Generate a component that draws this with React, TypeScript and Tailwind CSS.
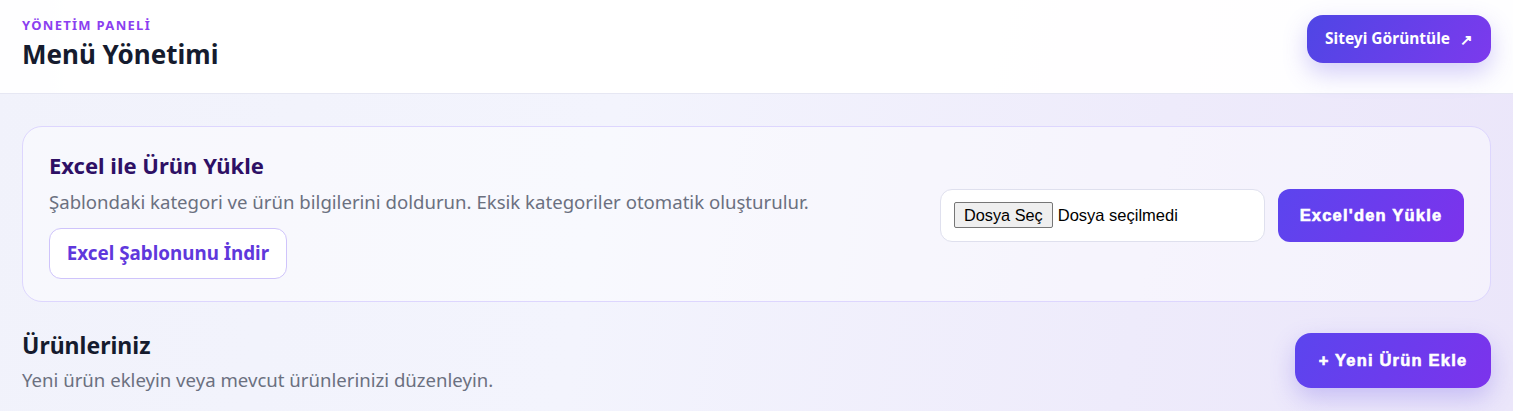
import React from "react";

export default function App() {
  const heavy = { fontFamily: '"Liberation Sans", Arial, sans-serif' };
  return (
    <div
      className="w-[1513px] h-[411px] overflow-hidden bg-[linear-gradient(100deg,#f1f2fb_0%,#f3f4fd_40%,#eeebfb_75%,#ebe6fa_100%)]"
      style={{ fontFamily: '"Noto Sans", "Open Sans", sans-serif' }}
    >
      <div className="relative">
        <div className="pointer-events-none absolute inset-y-0 left-0 w-[90px] bg-[linear-gradient(90deg,#e6e6f0,rgba(230,230,240,0))]" />
        <header className="relative flex h-[94px] items-start justify-between border-b border-[#e6e7f3] bg-white/95 px-[22px] pt-[15px]">
          <div className="mt-[2px] flex flex-col">
            <span className="text-[13px] font-bold leading-[16px] tracking-[0.1em] text-[#8b3ff0]">
              YÖNETİM PANELİ
            </span>
            <h1 className="mt-[5px] text-[26px] font-bold leading-[32px] text-[#151b2e]">
              Menü Yönetimi
            </h1>
          </div>
          <button className="flex h-[48px] w-[184px] items-center justify-center gap-[10px] rounded-[16px] bg-[linear-gradient(120deg,#4f46e5,#7c3aed)] text-[15.5px] font-bold text-white shadow-[0_10px_24px_rgba(99,80,230,0.28)]">
            <span>Siteyi Görüntüle</span>
            <span className="text-[15px] font-bold">↗</span>
          </button>
        </header>
      </div>

      <main className="px-[22px] pt-[32px]">
        <section className="flex items-center justify-between rounded-[20px] border border-[#ddd6fe] bg-white/45 px-[26px] pt-[24px] pb-[22px]">
          <div className="flex flex-col">
            <h2 className="text-[22px] font-bold leading-[28px] text-[#2e1065]">
              Excel ile Ürün Yükle
            </h2>
            <p className="mt-[10px] text-[18.6px] leading-[26px] text-[#6b7080]">
              Şablondaki kategori ve ürün bilgilerini doldurun. Eksik kategoriler otomatik oluşturulur.
            </p>
            <button className="mt-[13px] flex h-[51px] w-[238px] items-center justify-center rounded-[12px] border border-[#cfc4fb] bg-white text-[18.8px] font-bold text-[#5f38dc]">
              Excel Şablonunu İndir
            </button>
          </div>
          <div className="flex items-center gap-[13px]">
            <div className="flex h-[53px] w-[325px] items-center rounded-[12px] border border-[#dfe0ee] bg-white px-[13px]">
              <span
                className="flex h-[26px] items-center rounded-[2px] border border-[#767676] bg-[#efefef] px-[9px] text-[16.3px] text-black"
                style={heavy}
              >
                Dosya Seç
              </span>
              <span className="ml-[5px] text-[16.5px] text-black" style={heavy}>
                Dosya seçilmedi
              </span>
            </div>
            <button
              className="flex h-[53px] w-[186px] items-center justify-center rounded-[12px] bg-[linear-gradient(120deg,#5b45ee,#7c33ec)] text-[16.5px] font-bold tracking-[1.2px] text-white [-webkit-text-stroke:0.6px_#fff]"
              style={heavy}
            >
              Excel'den Yükle
            </button>
          </div>
        </section>

        <section className="mt-[28px] flex items-start justify-between">
          <div className="flex flex-col">
            <h2 className="text-[23px] font-bold leading-[30px] text-[#151b2e]">Ürünleriniz</h2>
            <p className="mt-[7px] text-[18.6px] leading-[26px] text-[#6b7080]">
              Yeni ürün ekleyin veya mevcut ürünlerinizi düzenleyin.
            </p>
          </div>
          <button
            className="mt-[3px] flex h-[55px] w-[196px] items-center justify-center rounded-[16px] bg-[linear-gradient(120deg,#5b45ee,#7c33ec)] text-[16.5px] font-bold tracking-[1.2px] text-white shadow-[0_10px_24px_rgba(99,80,230,0.28)] [-webkit-text-stroke:0.6px_#fff]"
            style={heavy}
          >
            + Yeni Ürün Ekle
          </button>
        </section>
      </main>
    </div>
  );
}
